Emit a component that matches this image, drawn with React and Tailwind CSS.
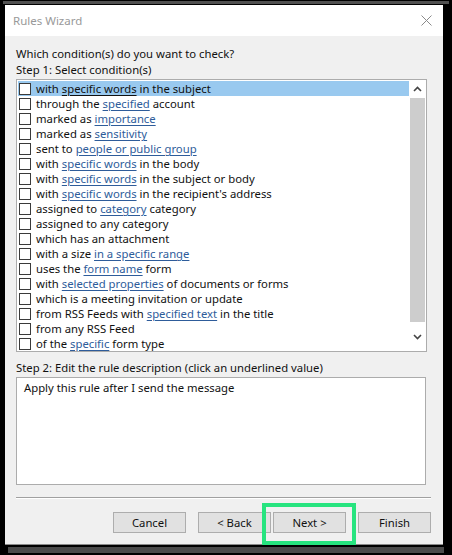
import React from "react";

const rows = [
  ["with ", "specific words", " in the subject"],
  ["through the ", "specified", " account"],
  ["marked as ", "importance", ""],
  ["marked as ", "sensitivity", ""],
  ["sent to ", "people or public group", ""],
  ["with ", "specific words", " in the body"],
  ["with ", "specific words", " in the subject or body"],
  ["with ", "specific words", " in the recipient's address"],
  ["assigned to ", "category", " category"],
  ["assigned to any category", "", ""],
  ["which has an attachment", "", ""],
  ["with a size ", "in a specific range", ""],
  ["uses the ", "form name", " form"],
  ["with ", "selected properties", " of documents or forms"],
  ["which is a meeting invitation or update", "", ""],
  ["from RSS Feeds with ", "specified text", " in the title"],
  ["from any RSS Feed", "", ""],
  ["of the ", "specific", " form type"],
];

function Row({ r, selected }) {
  return (
    <div className={`flex items-center h-[15px] leading-[15px] ${selected ? "bg-[#99c9ef]" : ""}`}>
      <div className="ml-[1px] w-[12px] h-[12px] border border-[#3a3a3a] bg-white shrink-0" />
      <div className="ml-[5px] whitespace-nowrap text-[#111111]">
        {r[0]}
        {r[1] && (
          <span className={`underline underline-offset-[2px] ${selected ? "text-[#111111]" : "text-[#2e5c9a]"}`}>{r[1]}</span>
        )}
        {r[2]}
      </div>
    </div>
  );
}

export default function App() {
  return (
    <div className="w-[452px] h-[555px] bg-black relative overflow-hidden text-[11.3px] leading-[16px]" style={{ fontFamily: '"Noto Sans", sans-serif' }}>
      <div className="h-[5px] flex flex-col">
        <div className="h-[1px]" />
        <div className="h-[3px] bg-[#505050] mx-[3px]" />
      </div>
      <div className="ml-[5px] w-[438px] h-[540px] flex flex-col">
        <div className="h-[31px] bg-white flex items-center justify-between pl-[8px] pr-[11px]">
          <span className="text-[#999999] text-[11.5px]">Rules Wizard</span>
          <svg width="11" height="11" viewBox="0 0 11 11">
            <path d="M0.5 0.5 L10.5 10.5 M10.5 0.5 L0.5 10.5" stroke="#8a8a8a" strokeWidth="1" />
          </svg>
        </div>
        <div className="flex-1 bg-[#f0f0f0] pl-[11px] pt-[10px] flex flex-col border-b border-[#8a8a8a]">
          <div className="text-[#111111] h-[16px]">Which condition(s) do you want to check?</div>
          <div className="text-[#111111] h-[16px]">Step 1: Select condition(s)</div>
          <div className="mt-[1px] w-[411px] h-[273px] border border-[#acacac] bg-white flex">
            <div className="flex-1 pt-[1px] pl-[1px]">
              {rows.map((r, i) => (
                <Row key={i} r={r} selected={i === 0} />
              ))}
            </div>
            <div className="w-[17px] flex flex-col items-center">
              <div className="h-[18px] w-full flex items-center justify-center">
                <svg width="9" height="6" viewBox="0 0 9 6">
                  <path d="M1 5 L4.5 1.5 L8 5" stroke="#444" strokeWidth="1.6" fill="none" />
                </svg>
              </div>
              <div className="w-[15px] h-[224px] bg-[#cdcdcd]" />
              <div className="flex-1 w-full flex items-center justify-center">
                <svg width="9" height="6" viewBox="0 0 9 6">
                  <path d="M1 1 L4.5 4.5 L8 1" stroke="#444" strokeWidth="1.6" fill="none" />
                </svg>
              </div>
            </div>
          </div>
          <div className="mt-[8px] text-[#111111] h-[16px]">Step 2: Edit the rule description (click an underlined value)</div>
          <div className="mt-[1px] w-[410px] h-[108px] border border-[#acacac] bg-white pl-[7px] pt-[2px] text-[#111111]">
            Apply this rule after I send the message
          </div>
          <div className="mt-[12px] w-[415px] h-[2px] border-t border-[#a0a0a0] border-b border-b-white" />
          <div className="mt-[13px] flex w-[415px] justify-end">
            <button className="w-[73px] h-[21px] bg-[#e1e1e1] border border-[#adadad] text-[#111111]">Cancel</button>
            <button className="ml-[12px] w-[73px] h-[21px] bg-[#e1e1e1] border border-[#adadad] text-[#111111]">&lt; Back</button>
            <button className="ml-[2px] w-[73px] h-[21px] bg-[#e1e1e1] border border-[#adadad] text-[#111111]">Next &gt;</button>
            <button className="ml-[12px] w-[73px] h-[21px] bg-[#e1e1e1] border border-[#adadad] text-[#111111]">Finish</button>
          </div>
        </div>
      </div>
      <div className="ml-[8px] w-[436px] h-[6px] mt-[2px] bg-[#4a4a4a]" />
      <div className="absolute left-[262px] top-[503px] w-[94px] h-[42px] border-[4px] border-[#27e47f]" />
    </div>
  );
}
